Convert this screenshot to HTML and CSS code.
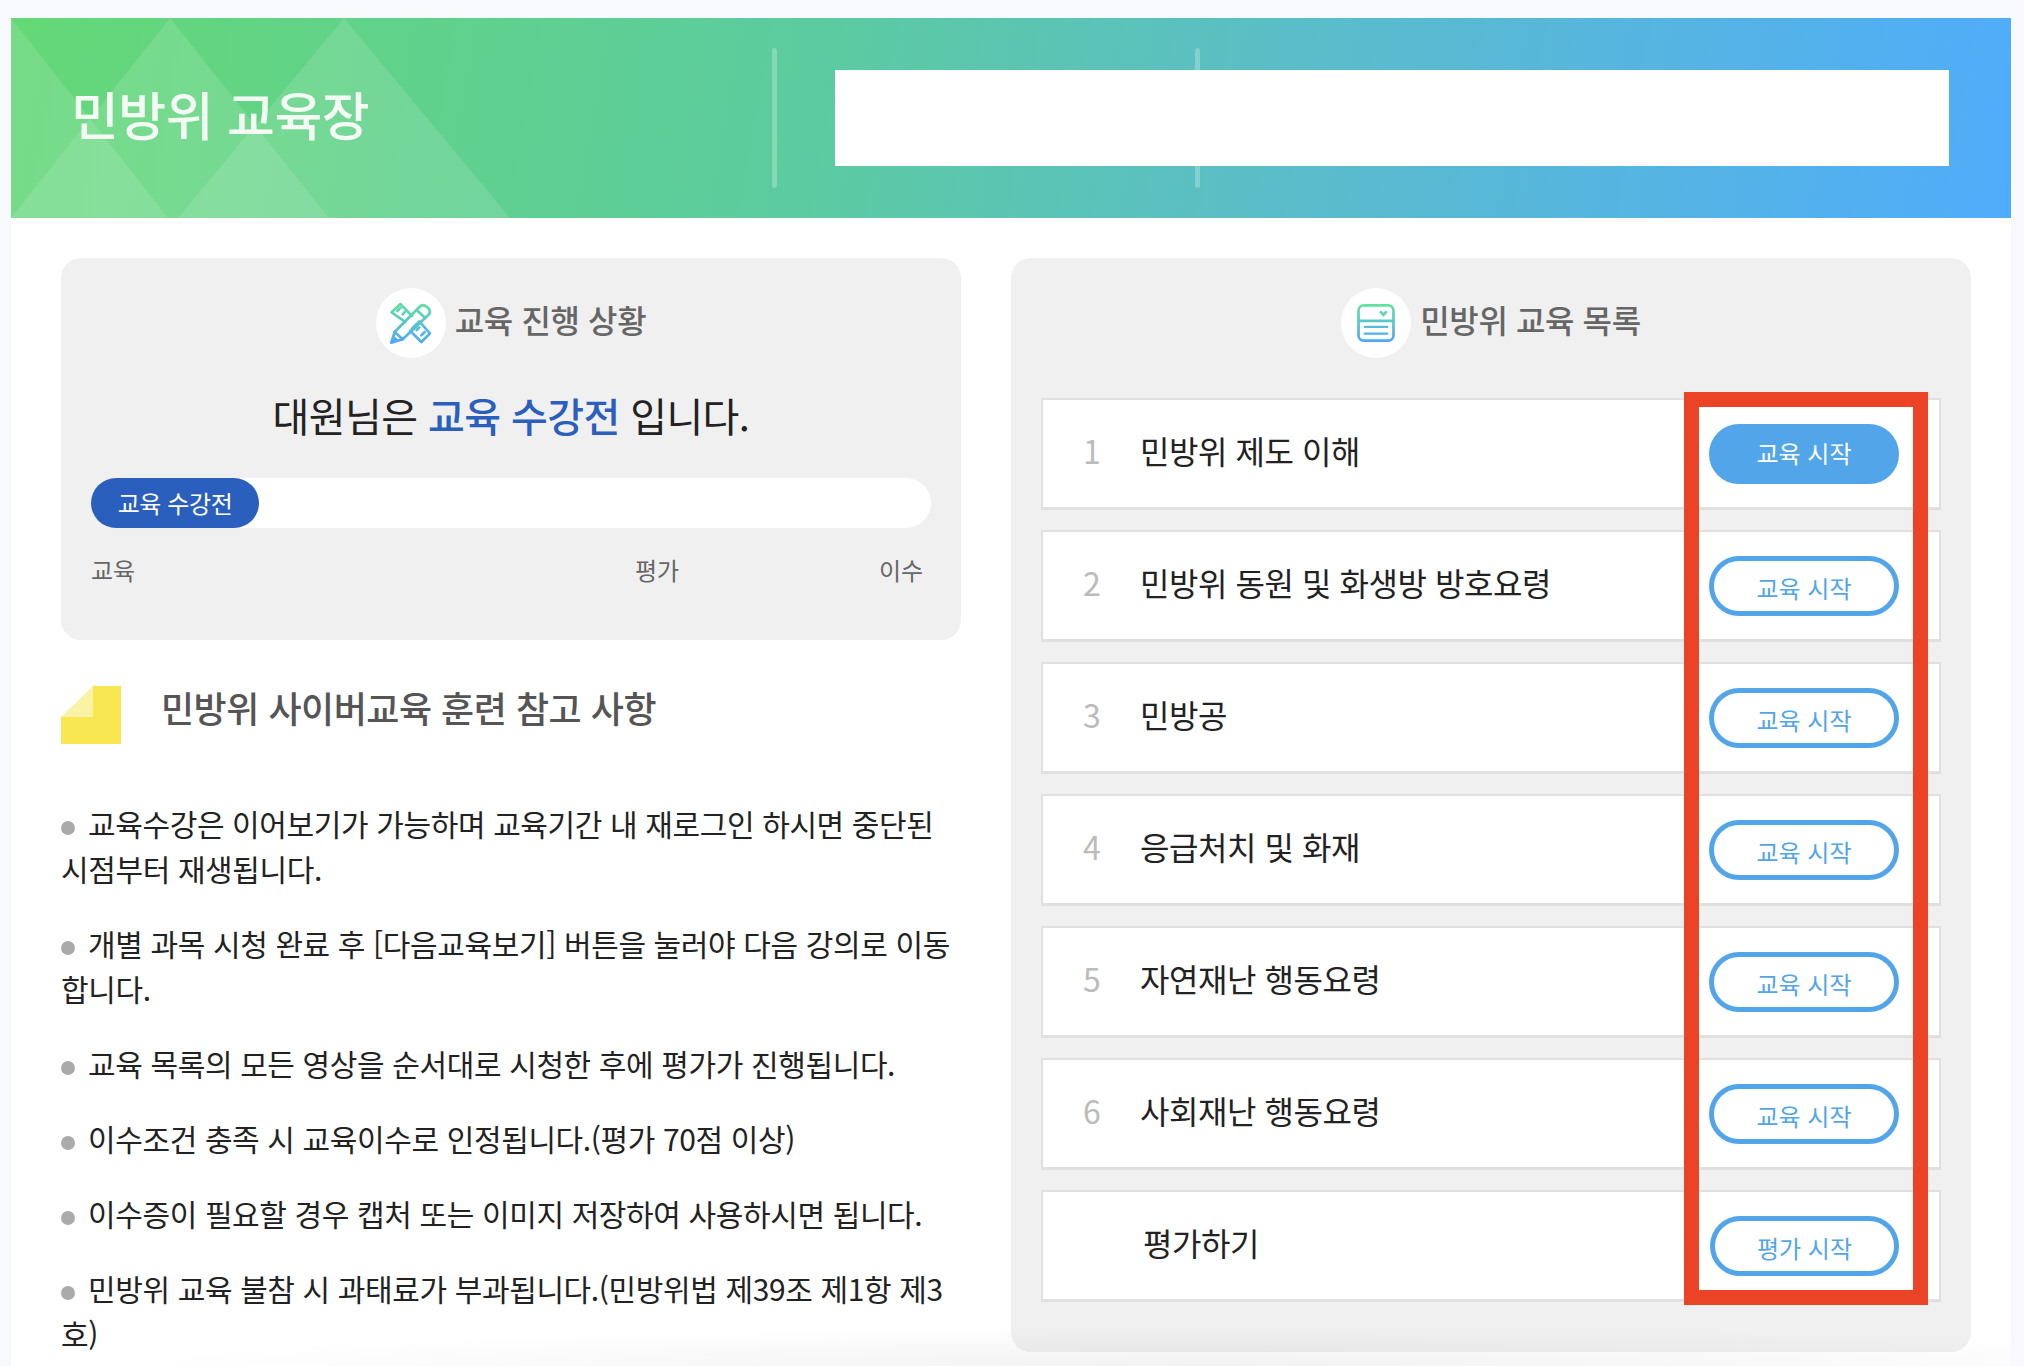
FILE: index.html
```html
<!DOCTYPE html>
<html lang="ko">
<head>
<meta charset="utf-8">
<title>민방위 교육장</title>
<link rel="stylesheet" href="styles.css">
</head>
<body>
<div class="page">
  <header class="banner">
    <svg class="banner-art" viewBox="0 0 520 200" width="520" height="200" aria-hidden="true">
      <polygon points="0,0 157,200 0,200" class="tri"/>
      <polygon points="159,0 318,200 0,200" class="tri"/>
      <polygon points="333,0 499,200 167,200" class="tri"/>
    </svg>
    <span class="divider divider-a"></span>
    <span class="divider divider-b"></span>
    <h1 class="banner-title">민방위 교육장</h1>
    <div class="banner-box"></div>
  </header>

  <main class="content">
    <div class="left">
      <section class="panel progress">
        <h2 class="panel-title">
          <span class="icon-disc">
            <svg viewBox="0 0 126 126" width="42" height="42" aria-hidden="true">
              <defs>
                <linearGradient id="g1" gradientUnits="userSpaceOnUse" x1="60" y1="0" x2="60" y2="126">
                  <stop offset="0" stop-color="#62e39b"/><stop offset="1" stop-color="#4da6fb"/>
                </linearGradient>
              </defs>
              <g fill="none" stroke="url(#g1)" stroke-width="8" stroke-linejoin="round" stroke-linecap="round">
                <path d="M46 60 L5 31 L31 6 L66 42"/>
                <path d="M22 27 L32 17 M38 37 L44 30"/>
                <path d="M66 80 L88 58 L120 94 L94 120 L60 86"/>
                <path d="M80 84 L88 76 M94 100 L104 90"/>
                <path d="M4 122 L14 90 L88 15 Q98 5 110 14 L116 20 Q124 30 114 40 L38 112 Z"/>
                <path d="M14 90 L38 112 M80 24 L106 48"/>
              </g>
              <polygon points="2,124 10,100 26,114" fill="url(#g1)"/>
            </svg>
          </span>
          <span class="panel-label">교육 진행 상황</span>
        </h2>
        <p class="status">대원님은 <strong>교육 수강전</strong> 입니다.</p>
        <div class="track"><span class="track-fill">교육 수강전</span></div>
        <div class="steps"><span class="step-a">교육</span><span class="step-b">평가</span><span class="step-c">이수</span></div>
      </section>

      <section class="notes">
        <h2 class="notes-title">
          <svg viewBox="0 0 60 58" width="60" height="58" aria-hidden="true">
            <polygon points="32,0 60,0 60,58 0,58 0,31 32,31" fill="#f8e750"/>
            <polygon points="32,0 32,31 0,31" fill="#faf3a5"/>
          </svg>
          <span>민방위 사이버교육 훈련 참고 사항</span>
        </h2>
        <ul class="note-list">
          <li><i class="dot"></i>교육수강은 이어보기가 가능하며 교육기간 내 재로그인 하시면 중단된 시점부터 재생됩니다.</li>
          <li><i class="dot"></i>개별 과목 시청 완료 후 [다음교육보기] 버튼을 눌러야 다음 강의로 이동합니다.</li>
          <li><i class="dot"></i>교육 목록의 모든 영상을 순서대로 시청한 후에 평가가 진행됩니다.</li>
          <li><i class="dot"></i>이수조건 충족 시 교육이수로 인정됩니다.(평가 70점 이상)</li>
          <li><i class="dot"></i>이수증이 필요할 경우 캡처 또는 이미지 저장하여 사용하시면 됩니다.</li>
          <li><i class="dot"></i>민방위 교육 불참 시 과태료가 부과됩니다.(민방위법 제39조 제1항 제3호)</li>
        </ul>
      </section>
    </div>

    <section class="panel courses">
      <h2 class="panel-title">
        <span class="icon-disc">
          <svg viewBox="0 0 112 113" width="38" height="38" aria-hidden="true">
            <defs>
              <linearGradient id="g2" gradientUnits="userSpaceOnUse" x1="56" y1="0" x2="56" y2="113">
                <stop offset="0" stop-color="#62e39b"/><stop offset="1" stop-color="#4da6fb"/>
              </linearGradient>
            </defs>
            <g fill="none" stroke="url(#g2)" stroke-width="8">
              <rect x="4" y="4" width="104" height="105" rx="16"/>
              <path d="M4 50 H108"/>
              <path d="M20 68 H92 M20 88 H92" stroke-width="7"/>
              <path d="M68 22 L78 32 L88 22" stroke-width="8"/>
            </g>
          </svg>
        </span>
        <span class="panel-label">민방위 교육 목록</span>
      </h2>
      <div class="course-list">
        <div class="course"><span class="num">1</span><span class="name">민방위 제도 이해</span><a class="btn btn-solid">교육 시작</a></div>
        <div class="course"><span class="num">2</span><span class="name">민방위 동원 및 화생방 방호요령</span><a class="btn">교육 시작</a></div>
        <div class="course"><span class="num">3</span><span class="name">민방공</span><a class="btn">교육 시작</a></div>
        <div class="course"><span class="num">4</span><span class="name">응급처치 및 화재</span><a class="btn">교육 시작</a></div>
        <div class="course"><span class="num">5</span><span class="name">자연재난 행동요령</span><a class="btn">교육 시작</a></div>
        <div class="course"><span class="num">6</span><span class="name">사회재난 행동요령</span><a class="btn">교육 시작</a></div>
        <div class="course"><span class="num"></span><span class="name name-eval">평가하기</span><a class="btn btn-eval">평가 시작</a></div>
        <div class="callout"></div>
      </div>
    </section>
  </main>
  <div class="bottom-fade"></div>
</div>
</body>
</html>
```

FILE: styles.css
```css
* { box-sizing: border-box; }
html, body { margin: 0; height: 100%; }
body {
  background: #f8f9fd;
  font-family: "Noto Sans CJK KR", "Noto Sans", sans-serif;
  color: #222;
  overflow: hidden;
}
.page {
  position: relative;
  margin: 0 13px 0 11px;
  padding-top: 18px;
  height: 1366px;
  background: linear-gradient(#f8f9fd 18px, #fff 18px);
  overflow: hidden;
}
.banner {
  position: relative;
  height: 200px;
  display: flex;
  align-items: center;
  justify-content: space-between;
  padding: 0 62px 0 60px;
  background: linear-gradient(100deg, #65d877 0%, #5ccba0 40%, #5bbccb 65%, #50acfb 100%);
}
.banner-art { position: absolute; left: 0; top: 0; }
.tri { fill: rgba(255, 255, 255, .12); }
.divider {
  position: absolute;
  top: 30px;
  width: 5px;
  height: 140px;
  border-radius: 3px;
  background: rgba(255, 255, 255, .25);
}
.divider-a { left: 761px; }
.divider-b { left: 1184px; }
.banner-title {
  position: relative;
  margin: 0 0 8px;
  font-size: 52px;
  font-weight: 500;
  color: #f4fbf5;
  line-height: 1;
  letter-spacing: -.5px;
}
.banner-box {
  position: relative;
  width: 1114px;
  height: 96px;
  background: #fff;
}
.content {
  display: grid;
  grid-template-columns: 900px 960px;
  column-gap: 50px;
  padding: 40px 0 0 50px;
  align-items: start;
}
.panel {
  background: #f0f0f0;
  border-radius: 20px;
}
.panel-title {
  display: flex;
  align-items: center;
  justify-content: center;
  gap: 9px;
  margin: 0;
  font-size: 32px;
  font-weight: 500;
  color: #666;
  line-height: 70px;
  height: 70px;
  letter-spacing: -.4px;
}
.panel-label { margin-bottom: 8px; }
.icon-disc {
  width: 70px;
  height: 70px;
  border-radius: 50%;
  background: #fff;
  display: flex;
  align-items: center;
  justify-content: center;
}
.progress {
  height: 382px;
  padding: 30px 30px 0;
}
.status {
  margin: 29px 0 0;
  text-align: center;
  font-size: 40px;
  line-height: 56px;
  color: #222;
  letter-spacing: -.6px;
}
.status strong { color: #2b5fbd; font-weight: 500; }
.track {
  margin-top: 35px;
  height: 50px;
  background: #fff;
  border-radius: 25px;
}
.track-fill {
  display: flex;
  align-items: center;
  justify-content: center;
  width: 168px;
  height: 50px;
  padding-bottom: 2px;
  border-radius: 25px;
  background: #2b5fbd;
  color: #fff;
  font-size: 24px;
  letter-spacing: -.4px;
}
.steps {
  display: flex;
  margin-top: 24px;
  font-size: 24px;
  line-height: 36px;
  color: #666;
}
.step-a { width: 544px; }
.step-b { width: 244px; }
.notes { padding-top: 46px; }
.notes-title {
  display: flex;
  align-items: flex-start;
  gap: 40px;
  margin: 0;
  font-size: 36px;
  font-weight: 500;
  color: #555;
  line-height: 42px;
  letter-spacing: -.5px;
}
.notes-title svg { flex: none; }
.note-list {
  list-style: none;
  margin: 57px 0 0;
  padding: 0;
  font-size: 30px;
  line-height: 45px;
  letter-spacing: -.38px;
  color: #222;
}
.note-list li { margin-bottom: 30px; }
.dot {
  display: inline-block;
  width: 14px;
  height: 14px;
  border-radius: 50%;
  background: #aaa;
  margin-right: 13px;
  vertical-align: 1px;
}
.courses {
  position: relative;
  height: 1094px;
  padding: 30px 30px 0;
}
.course-list {
  position: relative;
  margin-top: 40px;
  display: flex;
  flex-direction: column;
  gap: 20px;
}
.course {
  display: flex;
  align-items: center;
  height: 112px;
  padding-left: 40px;
  background: #fff;
  border: 2px solid #e0e0e0;
  border-width: 2px 2px 3px 2px;
}
.num {
  width: 57px;
  margin-bottom: 8px;
  font-size: 32px;
  color: #bbb;
}
.name {
  flex: 1;
  margin-bottom: 8px;
  font-size: 32px;
  letter-spacing: -.45px;
  color: #222;
}
.name-eval { padding-left: 3px; }
.btn {
  display: flex;
  align-items: center;
  justify-content: center;
  width: 190px;
  height: 60px;
  margin-right: 40px;
  border: 5px solid #52a5e8;
  border-radius: 30px;
  font-size: 24px;
  color: #52a5e8;
  padding-top: 4px;
}
.btn-solid {
  background: #52a5e8;
  color: #fff;
  padding: 0 0 3px;
}
.btn-eval { width: 189px; }
.callout {
  position: absolute;
  left: 643px;
  top: -6px;
  width: 244px;
  height: 913px;
  border: 15px solid #ea4325;
}
.bottom-fade {
  position: absolute;
  left: 0;
  right: 0;
  bottom: 0;
  height: 40px;
  pointer-events: none;
  background: radial-gradient(ellipse 55% 100% at 60% 100%, rgba(0, 0, 0, .05), rgba(0, 0, 0, 0));
}
```
